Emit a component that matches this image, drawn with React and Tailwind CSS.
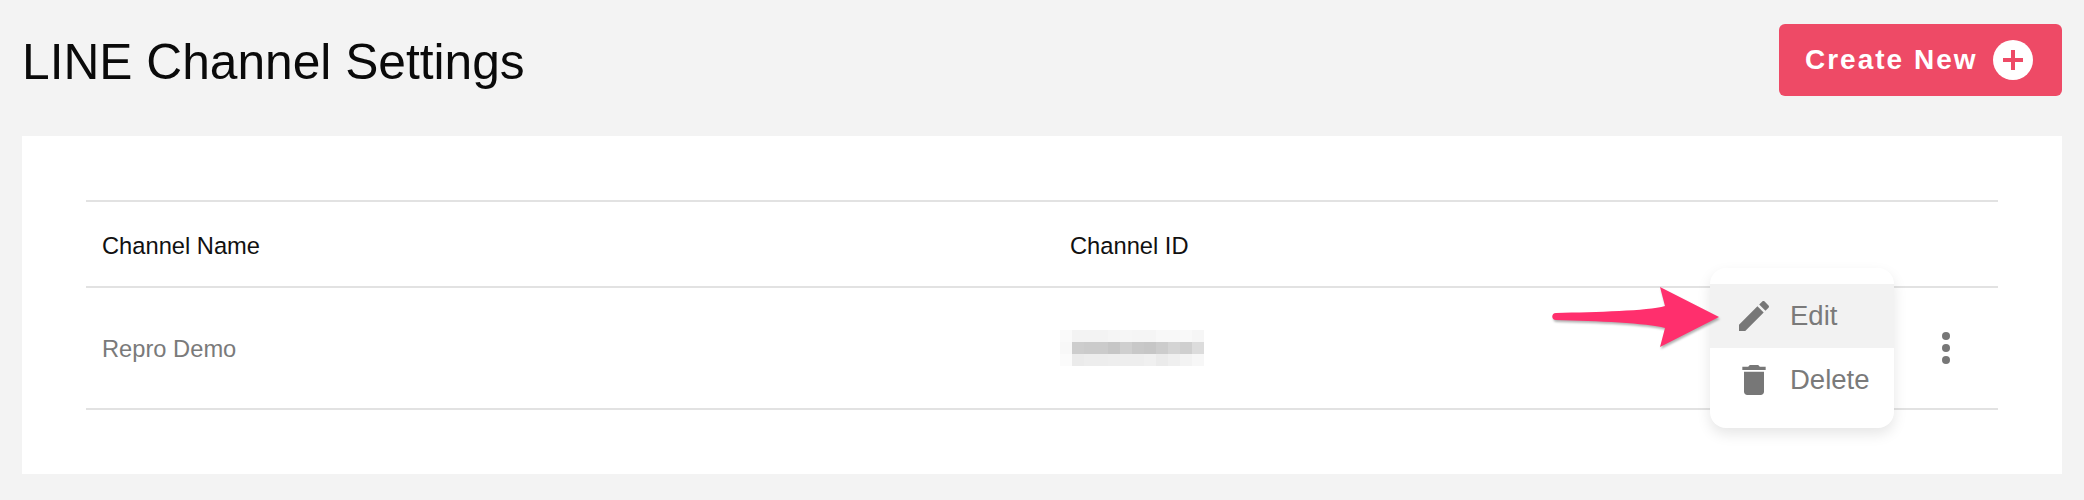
const FONT = "font-['Liberation_Sans',Arial,sans-serif]";

// pixelated (blurred out) channel id, one row per mosaic line
const MOSAIC = [
  ["#fafafa", "#f3f3f3", "#f3f3f3", "#f3f3f3", "#f5f5f5", "#f6f6f6", "#f5f5f5", "#f5f5f5", "#f8f8f8", "#f8f8f8", "#f9f9f9", "#f6f6f6"],
  ["#f8f8f8", "#cdcdcd", "#cbcbcb", "#cbcbcb", "#c6c6c6", "#cfcfcf", "#c8c8c8", "#c6c6c6", "#cccccc", "#d4d4d4", "#cfcfcf", "#dcdcdc"],
  ["#fbfbfb", "#ebebeb", "#ededed", "#ededed", "#eeeeee", "#eeeeee", "#eeeeee", "#f0f0f0", "#ebebeb", "#efefef", "#f3f3f3", "#f7f7f7"],
];

function BlurredId() {
  return (
    <svg width="144" height="36" viewBox="0 0 144 36" shapeRendering="crispEdges">
      {MOSAIC.map((row, y) =>
        row.map((c, x) => <rect key={x + "-" + y} x={x * 12} y={y * 12} width="12" height="12" fill={c} />)
      )}
    </svg>
  );
}

function Arrow() {
  return (
    <svg
      className="absolute left-[1525px] top-[150px] z-10 drop-shadow-[1px_2px_1px_rgba(0,0,0,0.3)]"
      width="176"
      height="64"
      viewBox="0 0 176 64"
    >
      <path
        d="M9 27 C50 26 100 25 118 20 L113 1 L172 31 L113 61 L118 42 C100 37 50 35 9 34 C4 34 4 27 9 27 Z"
        fill="#ff2f6d"
      />
    </svg>
  );
}

function MenuItem({ icon, label, active }) {
  return (
    <div className={`flex h-16 items-center gap-4 pl-6 ${active ? "bg-[#f2f2f2]" : ""}`}>
      <svg width="40" height="40" viewBox="0 0 24 24" fill="#777777">
        <path d={icon} />
      </svg>
      <span className="text-[27.5px] text-[#7a7a7a]">{label}</span>
    </div>
  );
}

export default function App() {
  return (
    <div className={`${FONT} min-h-[500px] bg-[#f3f3f3] pr-[22px] pt-6`}>
      <div className="flex items-center justify-between pl-[22px]">
        <h1 className="mt-1 text-[49.7px] leading-[60px] font-normal text-[#0a0a0a]">LINE Channel Settings</h1>
        <button className="flex h-[72px] w-[283px] items-center rounded-md bg-[#ee4a66] pl-[26px]">
          <span className="text-[28px] font-bold tracking-[2px] text-white">Create New</span>
          <span className="ml-[15px] flex h-10 w-10 items-center justify-center rounded-full bg-white">
            <svg width="20" height="20" viewBox="0 0 20 20" fill="#ee4a66">
              <path d="M8 0h4v8h8v4h-8v8H8v-8H0V8h8z" />
            </svg>
          </span>
        </button>
      </div>

      <div className="relative mt-10 ml-[22px] h-[338px] bg-white px-16 pt-16">
        <div className="grid h-[88px] grid-cols-[968px_1fr] items-center border-y-2 border-[#e2e2e2] pl-4 pt-[5px] text-[23.7px] text-[#111111]">
          <div>Channel Name</div>
          <div>Channel ID</div>
        </div>
        <div className="flex h-[122px] items-center border-b-2 border-[#e2e2e2] pl-4 text-[23.7px] text-[#7a7a7a]">
          <div className="w-[952px] pt-[3px]">Repro Demo</div>
          <div className="ml-[6px]">
            <BlurredId />
          </div>
          <div className="ml-auto mr-[48px] flex flex-col gap-1">
            <span className="h-2 w-2 rounded-full bg-[#777777]" />
            <span className="h-2 w-2 rounded-full bg-[#777777]" />
            <span className="h-2 w-2 rounded-full bg-[#777777]" />
          </div>
        </div>

        <Arrow />

        <div className="absolute left-[1688px] top-[132px] w-[184px] rounded-2xl bg-white py-4 shadow-[0_6px_14px_rgba(0,0,0,0.1)]">
          <MenuItem
            active
            label="Edit"
            icon="M3 17.25V21h3.75L17.81 9.94l-3.75-3.75L3 17.25zM20.71 7.04c.39-.39.39-1.02 0-1.41l-2.34-2.34c-.39-.39-1.02-.39-1.41 0l-1.83 1.83 3.75 3.75 1.83-1.83z"
          />
          <MenuItem
            label="Delete"
            icon="M6 19c0 1.1.9 2 2 2h8c1.1 0 2-.9 2-2V7H6v12zM19 4h-3.5l-1-1h-5l-1 1H5v2h14V4z"
          />
        </div>
      </div>
    </div>
  );
}
